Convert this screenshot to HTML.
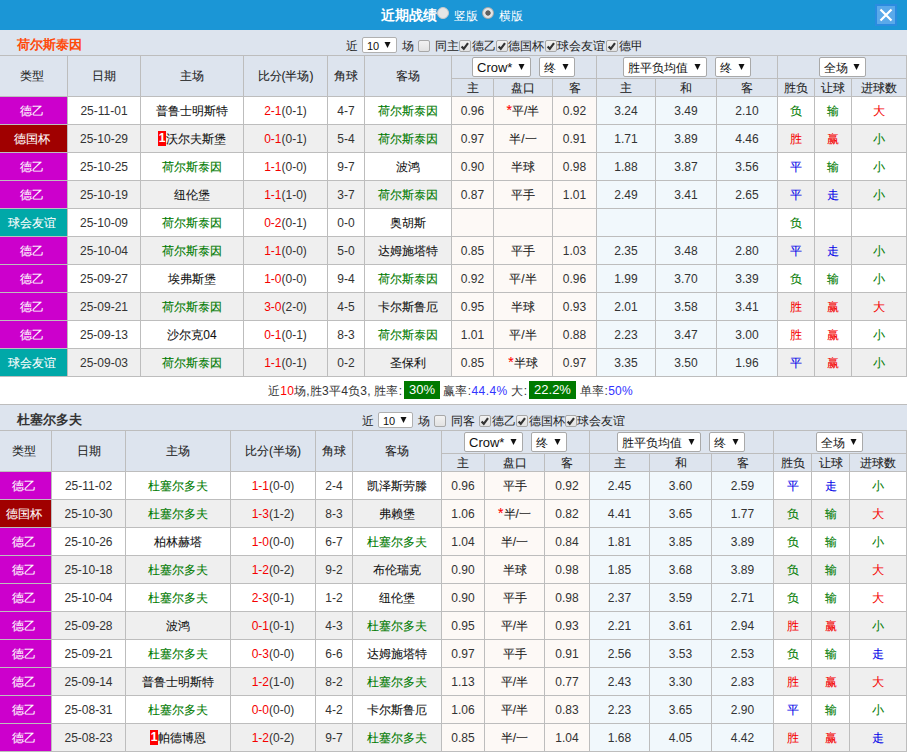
<!DOCTYPE html><html><head><meta charset="utf-8"><style>
*{margin:0;padding:0;box-sizing:border-box}
html,body{width:907px;height:752px;overflow:hidden;background:#fff}
body{position:relative;font-family:"Liberation Sans",sans-serif;font-size:12px;color:#333}
.a{position:absolute}
.t{position:absolute;text-align:center;white-space:nowrap;overflow:hidden}
.cj{-webkit-text-stroke:0.08px currentColor}
.lbl{position:absolute;white-space:nowrap;line-height:14px}
.sel{position:absolute;background:#fff;border:1px solid #a9a9a9;border-radius:2px;font-size:13px;color:#111;line-height:18px;white-space:nowrap}
.sel .sl{position:absolute;left:4px;top:1px}
.sel .arr{position:absolute;right:5px;top:6px}
.sel.small{font-size:11px;line-height:15px;border-color:#b0b0b0}
.sel.small .sl{left:4px;top:1px}
.sel.small .arr{right:5px;top:4px}
.cb{position:absolute;width:12px;height:12px;border:1px solid #a8a8a8;border-radius:2px;background:linear-gradient(#f2f2f2,#e2e2e2)}
.cb svg{position:absolute;left:-1px;top:-1px}
.radio{position:absolute;width:12px;height:12px;border-radius:50%;background:#e6e6e6;border:1px solid #c8c8c8}
.radio.on{border-color:#aaa;background:radial-gradient(circle,#5f5f5f 0,#5f5f5f 2.3px,#e4e4e4 3px)}
.close{position:absolute;width:22px;height:22px;background:#5aa9ea;border:2px solid #2b8be0}
.close svg{position:absolute;left:-2px;top:-2px}
.badge{display:inline-block;background:#f00;color:#fff;width:8px;height:15px;line-height:15px;text-align:center;font-weight:bold;font-size:12px;vertical-align:1px}
.gbox{position:absolute;background:#007a00;color:#fff;height:18px;line-height:18px;text-align:center;font-size:13px}
.ast{color:#f00;font-size:14px;line-height:12px}
.sum{font-size:12px;line-height:14px;color:#333}
</style></head><body><div class="a" style="left:0px;top:0px;width:907px;height:30px;background:#1b96d6;"></div><div class="lbl" style="left:381px;top:8px;font-size:14px;font-weight:bold;color:#fff">近期战绩</div><div class="radio" style="left:437px;top:7px"></div><div class="lbl" style="left:454px;top:9px;color:#fff">竖版</div><div class="radio on" style="left:482px;top:7px"></div><div class="lbl" style="left:499px;top:9px;color:#fff">横版</div><div class="close" style="left:875px;top:4px"><svg width="22" height="22" viewBox="0 0 22 22"><path d="M5.5 5.5 L16.5 16.5 M16.5 5.5 L5.5 16.5" stroke="#fff" stroke-width="2.2"/></svg></div><div class="a" style="left:0px;top:30px;width:907px;height:25px;background:#dde4ee;"></div><div class="lbl" style="left:17px;top:38px;font-size:13px;font-weight:bold;color:#ff4a0a">荷尔斯泰因</div><div class="lbl" style="left:346px;top:39px;color:#222">近</div><div class="sel small" style="left:362px;top:37px;width:35px;height:16px;"><span class="sl">10</span><svg class="arr" width="7" height="6" viewBox="0 0 7 6"><path d="M0.5 0H6.5L3.5 6Z" fill="#111"/></svg></div><div class="lbl" style="left:402px;top:39px;color:#222">场</div><div class="cb" style="left:418px;top:40px;"></div><div class="lbl" style="left:435px;top:39px;color:#222">同主</div><div class="cb" style="left:459px;top:40px;"><svg width="12" height="12" viewBox="0 0 12 12"><path d="M2.6 6.4 L4.8 8.8 L9 3.2" stroke="#333" stroke-width="2.2" fill="none"/></svg></div><div class="lbl" style="left:472px;top:39px;color:#222">德乙</div><div class="cb" style="left:496px;top:40px;"><svg width="12" height="12" viewBox="0 0 12 12"><path d="M2.6 6.4 L4.8 8.8 L9 3.2" stroke="#333" stroke-width="2.2" fill="none"/></svg></div><div class="lbl" style="left:508px;top:39px;color:#222">德国杯</div><div class="cb" style="left:545px;top:40px;"><svg width="12" height="12" viewBox="0 0 12 12"><path d="M2.6 6.4 L4.8 8.8 L9 3.2" stroke="#333" stroke-width="2.2" fill="none"/></svg></div><div class="lbl" style="left:557px;top:39px;color:#222">球会友谊</div><div class="cb" style="left:606px;top:40px;"><svg width="12" height="12" viewBox="0 0 12 12"><path d="M2.6 6.4 L4.8 8.8 L9 3.2" stroke="#333" stroke-width="2.2" fill="none"/></svg></div><div class="lbl" style="left:619px;top:39px;color:#222">德甲</div><div class="a" style="left:0px;top:55px;width:907px;height:41px;background:#dde4ee;"></div><div class="a" style="left:0px;top:96px;width:907px;height:28px;background:#ffffff;"></div><div class="a" style="left:67px;top:96px;width:384px;height:28px;background:#ffffff;"></div><div class="a" style="left:451px;top:96px;width:145px;height:28px;background:#fdf9f6;"></div><div class="a" style="left:596px;top:96px;width:181px;height:28px;background:#f1f8fc;"></div><div class="a" style="left:0px;top:96px;width:67px;height:28px;background:#cc00cc;"></div><div class="a" style="left:0px;top:124px;width:907px;height:28px;background:#efefef;"></div><div class="a" style="left:67px;top:124px;width:384px;height:28px;background:#efefef;"></div><div class="a" style="left:451px;top:124px;width:145px;height:28px;background:#fdf9f6;"></div><div class="a" style="left:596px;top:124px;width:181px;height:28px;background:#f1f8fc;"></div><div class="a" style="left:0px;top:124px;width:67px;height:28px;background:#a00000;"></div><div class="a" style="left:0px;top:152px;width:907px;height:28px;background:#ffffff;"></div><div class="a" style="left:67px;top:152px;width:384px;height:28px;background:#ffffff;"></div><div class="a" style="left:451px;top:152px;width:145px;height:28px;background:#fdf9f6;"></div><div class="a" style="left:596px;top:152px;width:181px;height:28px;background:#f1f8fc;"></div><div class="a" style="left:0px;top:152px;width:67px;height:28px;background:#cc00cc;"></div><div class="a" style="left:0px;top:180px;width:907px;height:28px;background:#efefef;"></div><div class="a" style="left:67px;top:180px;width:384px;height:28px;background:#efefef;"></div><div class="a" style="left:451px;top:180px;width:145px;height:28px;background:#fdf9f6;"></div><div class="a" style="left:596px;top:180px;width:181px;height:28px;background:#f1f8fc;"></div><div class="a" style="left:0px;top:180px;width:67px;height:28px;background:#cc00cc;"></div><div class="a" style="left:0px;top:208px;width:907px;height:28px;background:#ffffff;"></div><div class="a" style="left:67px;top:208px;width:384px;height:28px;background:#ffffff;"></div><div class="a" style="left:451px;top:208px;width:145px;height:28px;background:#fdf9f6;"></div><div class="a" style="left:596px;top:208px;width:181px;height:28px;background:#f1f8fc;"></div><div class="a" style="left:0px;top:208px;width:67px;height:28px;background:#00a8a8;"></div><div class="a" style="left:0px;top:236px;width:907px;height:28px;background:#efefef;"></div><div class="a" style="left:67px;top:236px;width:384px;height:28px;background:#efefef;"></div><div class="a" style="left:451px;top:236px;width:145px;height:28px;background:#fdf9f6;"></div><div class="a" style="left:596px;top:236px;width:181px;height:28px;background:#f1f8fc;"></div><div class="a" style="left:0px;top:236px;width:67px;height:28px;background:#cc00cc;"></div><div class="a" style="left:0px;top:264px;width:907px;height:28px;background:#ffffff;"></div><div class="a" style="left:67px;top:264px;width:384px;height:28px;background:#ffffff;"></div><div class="a" style="left:451px;top:264px;width:145px;height:28px;background:#fdf9f6;"></div><div class="a" style="left:596px;top:264px;width:181px;height:28px;background:#f1f8fc;"></div><div class="a" style="left:0px;top:264px;width:67px;height:28px;background:#cc00cc;"></div><div class="a" style="left:0px;top:292px;width:907px;height:28px;background:#efefef;"></div><div class="a" style="left:67px;top:292px;width:384px;height:28px;background:#efefef;"></div><div class="a" style="left:451px;top:292px;width:145px;height:28px;background:#fdf9f6;"></div><div class="a" style="left:596px;top:292px;width:181px;height:28px;background:#f1f8fc;"></div><div class="a" style="left:0px;top:292px;width:67px;height:28px;background:#cc00cc;"></div><div class="a" style="left:0px;top:320px;width:907px;height:28px;background:#ffffff;"></div><div class="a" style="left:67px;top:320px;width:384px;height:28px;background:#ffffff;"></div><div class="a" style="left:451px;top:320px;width:145px;height:28px;background:#fdf9f6;"></div><div class="a" style="left:596px;top:320px;width:181px;height:28px;background:#f1f8fc;"></div><div class="a" style="left:0px;top:320px;width:67px;height:28px;background:#cc00cc;"></div><div class="a" style="left:0px;top:348px;width:907px;height:28px;background:#efefef;"></div><div class="a" style="left:67px;top:348px;width:384px;height:28px;background:#efefef;"></div><div class="a" style="left:451px;top:348px;width:145px;height:28px;background:#fdf9f6;"></div><div class="a" style="left:596px;top:348px;width:181px;height:28px;background:#f1f8fc;"></div><div class="a" style="left:0px;top:348px;width:67px;height:28px;background:#00a8a8;"></div><div class="a" style="left:0px;top:55px;width:907px;height:1px;background:#bdbdbd;"></div><div class="a" style="left:451px;top:78px;width:456px;height:1px;background:#bdbdbd;"></div><div class="a" style="left:0px;top:96px;width:907px;height:1px;background:#bdbdbd;"></div><div class="a" style="left:0px;top:124px;width:907px;height:1px;background:#bdbdbd;"></div><div class="a" style="left:0px;top:152px;width:907px;height:1px;background:#bdbdbd;"></div><div class="a" style="left:0px;top:180px;width:907px;height:1px;background:#bdbdbd;"></div><div class="a" style="left:0px;top:208px;width:907px;height:1px;background:#bdbdbd;"></div><div class="a" style="left:0px;top:236px;width:907px;height:1px;background:#bdbdbd;"></div><div class="a" style="left:0px;top:264px;width:907px;height:1px;background:#bdbdbd;"></div><div class="a" style="left:0px;top:292px;width:907px;height:1px;background:#bdbdbd;"></div><div class="a" style="left:0px;top:320px;width:907px;height:1px;background:#bdbdbd;"></div><div class="a" style="left:0px;top:348px;width:907px;height:1px;background:#bdbdbd;"></div><div class="a" style="left:0px;top:376px;width:907px;height:1px;background:#bdbdbd;"></div><div class="a" style="left:67px;top:55px;width:1px;height:322px;background:#bdbdbd;"></div><div class="a" style="left:140px;top:55px;width:1px;height:322px;background:#bdbdbd;"></div><div class="a" style="left:243px;top:55px;width:1px;height:322px;background:#bdbdbd;"></div><div class="a" style="left:327px;top:55px;width:1px;height:322px;background:#bdbdbd;"></div><div class="a" style="left:364px;top:55px;width:1px;height:322px;background:#bdbdbd;"></div><div class="a" style="left:451px;top:55px;width:1px;height:322px;background:#bdbdbd;"></div><div class="a" style="left:596px;top:55px;width:1px;height:322px;background:#bdbdbd;"></div><div class="a" style="left:777px;top:55px;width:1px;height:322px;background:#bdbdbd;"></div><div class="a" style="left:906px;top:55px;width:1px;height:322px;background:#bdbdbd;"></div><div class="a" style="left:493px;top:78px;width:1px;height:299px;background:#bdbdbd;"></div><div class="a" style="left:552px;top:78px;width:1px;height:299px;background:#bdbdbd;"></div><div class="a" style="left:655px;top:78px;width:1px;height:299px;background:#bdbdbd;"></div><div class="a" style="left:716px;top:78px;width:1px;height:299px;background:#bdbdbd;"></div><div class="a" style="left:814px;top:78px;width:1px;height:299px;background:#bdbdbd;"></div><div class="a" style="left:851px;top:78px;width:1px;height:299px;background:#bdbdbd;"></div><div class="t cj" style="left:-4px;top:56px;width:71px;height:40px;line-height:40px;color:#222;">类型</div><div class="t cj" style="left:68px;top:56px;width:72px;height:40px;line-height:40px;color:#222;">日期</div><div class="t cj" style="left:141px;top:56px;width:102px;height:40px;line-height:40px;color:#222;">主场</div><div class="t cj" style="left:244px;top:56px;width:83px;height:40px;line-height:40px;color:#222;">比分(半场)</div><div class="t cj" style="left:328px;top:56px;width:36px;height:40px;line-height:40px;color:#222;">角球</div><div class="t cj" style="left:365px;top:56px;width:86px;height:40px;line-height:40px;color:#222;">客场</div><div class="t cj" style="left:452px;top:80px;width:41px;height:17px;line-height:17px;color:#222;">主</div><div class="t cj" style="left:494px;top:80px;width:58px;height:17px;line-height:17px;color:#222;">盘口</div><div class="t cj" style="left:553px;top:80px;width:43px;height:17px;line-height:17px;color:#222;">客</div><div class="t cj" style="left:597px;top:80px;width:58px;height:17px;line-height:17px;color:#222;">主</div><div class="t cj" style="left:656px;top:80px;width:60px;height:17px;line-height:17px;color:#222;">和</div><div class="t cj" style="left:717px;top:80px;width:60px;height:17px;line-height:17px;color:#222;">客</div><div class="t cj" style="left:778px;top:80px;width:36px;height:17px;line-height:17px;color:#222;">胜负</div><div class="t cj" style="left:815px;top:80px;width:36px;height:17px;line-height:17px;color:#222;">让球</div><div class="t cj" style="left:852px;top:80px;width:54px;height:17px;line-height:17px;color:#222;">进球数</div><div class="t cj" style="left:-4px;top:98px;width:71px;height:27px;line-height:27px;color:#fff;">德乙</div><div class="t" style="left:68px;top:98px;width:72px;height:27px;line-height:27px;color:#333;">25-11-01</div><div class="t cj" style="left:141px;top:98px;width:102px;height:27px;line-height:27px;color:#111;">普鲁士明斯特</div><div class="t" style="left:244px;top:98px;width:83px;height:27px;line-height:27px;color:#333;"><span style="color:#f50000">2-1</span>(0-1)</div><div class="t" style="left:328px;top:98px;width:36px;height:27px;line-height:27px;color:#333;">4-7</div><div class="t cj" style="left:365px;top:98px;width:86px;height:27px;line-height:27px;color:#007a00;">荷尔斯泰因</div><div class="t" style="left:452px;top:98px;width:41px;height:27px;line-height:27px;color:#333;">0.96</div><div class="t cj" style="left:494px;top:98px;width:58px;height:27px;line-height:27px;color:#222;"><span class="ast">*</span>平/半</div><div class="t" style="left:553px;top:98px;width:43px;height:27px;line-height:27px;color:#333;">0.92</div><div class="t" style="left:597px;top:98px;width:58px;height:27px;line-height:27px;color:#333;">3.24</div><div class="t" style="left:656px;top:98px;width:60px;height:27px;line-height:27px;color:#333;">3.49</div><div class="t" style="left:717px;top:98px;width:60px;height:27px;line-height:27px;color:#333;">2.10</div><div class="t cj" style="left:778px;top:98px;width:36px;height:27px;line-height:27px;color:#007a00;">负</div><div class="t cj" style="left:815px;top:98px;width:36px;height:27px;line-height:27px;color:#007a00;">输</div><div class="t cj" style="left:852px;top:98px;width:54px;height:27px;line-height:27px;color:#f50000;">大</div><div class="t cj" style="left:-4px;top:126px;width:71px;height:27px;line-height:27px;color:#fff;">德国杯</div><div class="t" style="left:68px;top:126px;width:72px;height:27px;line-height:27px;color:#333;">25-10-29</div><div class="t cj" style="left:141px;top:126px;width:102px;height:27px;line-height:27px;color:#111;"><span class="badge">1</span>沃尔夫斯堡</div><div class="t" style="left:244px;top:126px;width:83px;height:27px;line-height:27px;color:#333;"><span style="color:#f50000">0-1</span>(0-1)</div><div class="t" style="left:328px;top:126px;width:36px;height:27px;line-height:27px;color:#333;">5-4</div><div class="t cj" style="left:365px;top:126px;width:86px;height:27px;line-height:27px;color:#007a00;">荷尔斯泰因</div><div class="t" style="left:452px;top:126px;width:41px;height:27px;line-height:27px;color:#333;">0.97</div><div class="t cj" style="left:494px;top:126px;width:58px;height:27px;line-height:27px;color:#222;">半/一</div><div class="t" style="left:553px;top:126px;width:43px;height:27px;line-height:27px;color:#333;">0.91</div><div class="t" style="left:597px;top:126px;width:58px;height:27px;line-height:27px;color:#333;">1.71</div><div class="t" style="left:656px;top:126px;width:60px;height:27px;line-height:27px;color:#333;">3.89</div><div class="t" style="left:717px;top:126px;width:60px;height:27px;line-height:27px;color:#333;">4.46</div><div class="t cj" style="left:778px;top:126px;width:36px;height:27px;line-height:27px;color:#f50000;">胜</div><div class="t cj" style="left:815px;top:126px;width:36px;height:27px;line-height:27px;color:#f50000;">赢</div><div class="t cj" style="left:852px;top:126px;width:54px;height:27px;line-height:27px;color:#007a00;">小</div><div class="t cj" style="left:-4px;top:154px;width:71px;height:27px;line-height:27px;color:#fff;">德乙</div><div class="t" style="left:68px;top:154px;width:72px;height:27px;line-height:27px;color:#333;">25-10-25</div><div class="t cj" style="left:141px;top:154px;width:102px;height:27px;line-height:27px;color:#007a00;">荷尔斯泰因</div><div class="t" style="left:244px;top:154px;width:83px;height:27px;line-height:27px;color:#333;"><span style="color:#f50000">1-1</span>(0-0)</div><div class="t" style="left:328px;top:154px;width:36px;height:27px;line-height:27px;color:#333;">9-7</div><div class="t cj" style="left:365px;top:154px;width:86px;height:27px;line-height:27px;color:#111;">波鸿</div><div class="t" style="left:452px;top:154px;width:41px;height:27px;line-height:27px;color:#333;">0.90</div><div class="t cj" style="left:494px;top:154px;width:58px;height:27px;line-height:27px;color:#222;">半球</div><div class="t" style="left:553px;top:154px;width:43px;height:27px;line-height:27px;color:#333;">0.98</div><div class="t" style="left:597px;top:154px;width:58px;height:27px;line-height:27px;color:#333;">1.88</div><div class="t" style="left:656px;top:154px;width:60px;height:27px;line-height:27px;color:#333;">3.87</div><div class="t" style="left:717px;top:154px;width:60px;height:27px;line-height:27px;color:#333;">3.56</div><div class="t cj" style="left:778px;top:154px;width:36px;height:27px;line-height:27px;color:#0000e8;">平</div><div class="t cj" style="left:815px;top:154px;width:36px;height:27px;line-height:27px;color:#007a00;">输</div><div class="t cj" style="left:852px;top:154px;width:54px;height:27px;line-height:27px;color:#007a00;">小</div><div class="t cj" style="left:-4px;top:182px;width:71px;height:27px;line-height:27px;color:#fff;">德乙</div><div class="t" style="left:68px;top:182px;width:72px;height:27px;line-height:27px;color:#333;">25-10-19</div><div class="t cj" style="left:141px;top:182px;width:102px;height:27px;line-height:27px;color:#111;">纽伦堡</div><div class="t" style="left:244px;top:182px;width:83px;height:27px;line-height:27px;color:#333;"><span style="color:#f50000">1-1</span>(1-0)</div><div class="t" style="left:328px;top:182px;width:36px;height:27px;line-height:27px;color:#333;">3-7</div><div class="t cj" style="left:365px;top:182px;width:86px;height:27px;line-height:27px;color:#007a00;">荷尔斯泰因</div><div class="t" style="left:452px;top:182px;width:41px;height:27px;line-height:27px;color:#333;">0.87</div><div class="t cj" style="left:494px;top:182px;width:58px;height:27px;line-height:27px;color:#222;">平手</div><div class="t" style="left:553px;top:182px;width:43px;height:27px;line-height:27px;color:#333;">1.01</div><div class="t" style="left:597px;top:182px;width:58px;height:27px;line-height:27px;color:#333;">2.49</div><div class="t" style="left:656px;top:182px;width:60px;height:27px;line-height:27px;color:#333;">3.41</div><div class="t" style="left:717px;top:182px;width:60px;height:27px;line-height:27px;color:#333;">2.65</div><div class="t cj" style="left:778px;top:182px;width:36px;height:27px;line-height:27px;color:#0000e8;">平</div><div class="t cj" style="left:815px;top:182px;width:36px;height:27px;line-height:27px;color:#0000e8;">走</div><div class="t cj" style="left:852px;top:182px;width:54px;height:27px;line-height:27px;color:#007a00;">小</div><div class="t cj" style="left:-4px;top:210px;width:71px;height:27px;line-height:27px;color:#fff;">球会友谊</div><div class="t" style="left:68px;top:210px;width:72px;height:27px;line-height:27px;color:#333;">25-10-09</div><div class="t cj" style="left:141px;top:210px;width:102px;height:27px;line-height:27px;color:#007a00;">荷尔斯泰因</div><div class="t" style="left:244px;top:210px;width:83px;height:27px;line-height:27px;color:#333;"><span style="color:#f50000">0-2</span>(0-1)</div><div class="t" style="left:328px;top:210px;width:36px;height:27px;line-height:27px;color:#333;">0-0</div><div class="t cj" style="left:365px;top:210px;width:86px;height:27px;line-height:27px;color:#111;">奥胡斯</div><div class="t" style="left:452px;top:210px;width:41px;height:27px;line-height:27px;color:#333;"></div><div class="t" style="left:494px;top:210px;width:58px;height:27px;line-height:27px;color:#222;"></div><div class="t" style="left:553px;top:210px;width:43px;height:27px;line-height:27px;color:#333;"></div><div class="t" style="left:597px;top:210px;width:58px;height:27px;line-height:27px;color:#333;"></div><div class="t" style="left:656px;top:210px;width:60px;height:27px;line-height:27px;color:#333;"></div><div class="t" style="left:717px;top:210px;width:60px;height:27px;line-height:27px;color:#333;"></div><div class="t cj" style="left:778px;top:210px;width:36px;height:27px;line-height:27px;color:#007a00;">负</div><div class="t" style="left:815px;top:210px;width:36px;height:27px;line-height:27px;color:#333;"></div><div class="t" style="left:852px;top:210px;width:54px;height:27px;line-height:27px;color:#333;"></div><div class="t cj" style="left:-4px;top:238px;width:71px;height:27px;line-height:27px;color:#fff;">德乙</div><div class="t" style="left:68px;top:238px;width:72px;height:27px;line-height:27px;color:#333;">25-10-04</div><div class="t cj" style="left:141px;top:238px;width:102px;height:27px;line-height:27px;color:#007a00;">荷尔斯泰因</div><div class="t" style="left:244px;top:238px;width:83px;height:27px;line-height:27px;color:#333;"><span style="color:#f50000">1-1</span>(0-0)</div><div class="t" style="left:328px;top:238px;width:36px;height:27px;line-height:27px;color:#333;">5-0</div><div class="t cj" style="left:365px;top:238px;width:86px;height:27px;line-height:27px;color:#111;">达姆施塔特</div><div class="t" style="left:452px;top:238px;width:41px;height:27px;line-height:27px;color:#333;">0.85</div><div class="t cj" style="left:494px;top:238px;width:58px;height:27px;line-height:27px;color:#222;">平手</div><div class="t" style="left:553px;top:238px;width:43px;height:27px;line-height:27px;color:#333;">1.03</div><div class="t" style="left:597px;top:238px;width:58px;height:27px;line-height:27px;color:#333;">2.35</div><div class="t" style="left:656px;top:238px;width:60px;height:27px;line-height:27px;color:#333;">3.48</div><div class="t" style="left:717px;top:238px;width:60px;height:27px;line-height:27px;color:#333;">2.80</div><div class="t cj" style="left:778px;top:238px;width:36px;height:27px;line-height:27px;color:#0000e8;">平</div><div class="t cj" style="left:815px;top:238px;width:36px;height:27px;line-height:27px;color:#0000e8;">走</div><div class="t cj" style="left:852px;top:238px;width:54px;height:27px;line-height:27px;color:#007a00;">小</div><div class="t cj" style="left:-4px;top:266px;width:71px;height:27px;line-height:27px;color:#fff;">德乙</div><div class="t" style="left:68px;top:266px;width:72px;height:27px;line-height:27px;color:#333;">25-09-27</div><div class="t cj" style="left:141px;top:266px;width:102px;height:27px;line-height:27px;color:#111;">埃弗斯堡</div><div class="t" style="left:244px;top:266px;width:83px;height:27px;line-height:27px;color:#333;"><span style="color:#f50000">1-0</span>(0-0)</div><div class="t" style="left:328px;top:266px;width:36px;height:27px;line-height:27px;color:#333;">9-4</div><div class="t cj" style="left:365px;top:266px;width:86px;height:27px;line-height:27px;color:#007a00;">荷尔斯泰因</div><div class="t" style="left:452px;top:266px;width:41px;height:27px;line-height:27px;color:#333;">0.92</div><div class="t cj" style="left:494px;top:266px;width:58px;height:27px;line-height:27px;color:#222;">平/半</div><div class="t" style="left:553px;top:266px;width:43px;height:27px;line-height:27px;color:#333;">0.96</div><div class="t" style="left:597px;top:266px;width:58px;height:27px;line-height:27px;color:#333;">1.99</div><div class="t" style="left:656px;top:266px;width:60px;height:27px;line-height:27px;color:#333;">3.70</div><div class="t" style="left:717px;top:266px;width:60px;height:27px;line-height:27px;color:#333;">3.39</div><div class="t cj" style="left:778px;top:266px;width:36px;height:27px;line-height:27px;color:#007a00;">负</div><div class="t cj" style="left:815px;top:266px;width:36px;height:27px;line-height:27px;color:#007a00;">输</div><div class="t cj" style="left:852px;top:266px;width:54px;height:27px;line-height:27px;color:#007a00;">小</div><div class="t cj" style="left:-4px;top:294px;width:71px;height:27px;line-height:27px;color:#fff;">德乙</div><div class="t" style="left:68px;top:294px;width:72px;height:27px;line-height:27px;color:#333;">25-09-21</div><div class="t cj" style="left:141px;top:294px;width:102px;height:27px;line-height:27px;color:#007a00;">荷尔斯泰因</div><div class="t" style="left:244px;top:294px;width:83px;height:27px;line-height:27px;color:#333;"><span style="color:#f50000">3-0</span>(2-0)</div><div class="t" style="left:328px;top:294px;width:36px;height:27px;line-height:27px;color:#333;">4-5</div><div class="t cj" style="left:365px;top:294px;width:86px;height:27px;line-height:27px;color:#111;">卡尔斯鲁厄</div><div class="t" style="left:452px;top:294px;width:41px;height:27px;line-height:27px;color:#333;">0.95</div><div class="t cj" style="left:494px;top:294px;width:58px;height:27px;line-height:27px;color:#222;">半球</div><div class="t" style="left:553px;top:294px;width:43px;height:27px;line-height:27px;color:#333;">0.93</div><div class="t" style="left:597px;top:294px;width:58px;height:27px;line-height:27px;color:#333;">2.01</div><div class="t" style="left:656px;top:294px;width:60px;height:27px;line-height:27px;color:#333;">3.58</div><div class="t" style="left:717px;top:294px;width:60px;height:27px;line-height:27px;color:#333;">3.41</div><div class="t cj" style="left:778px;top:294px;width:36px;height:27px;line-height:27px;color:#f50000;">胜</div><div class="t cj" style="left:815px;top:294px;width:36px;height:27px;line-height:27px;color:#f50000;">赢</div><div class="t cj" style="left:852px;top:294px;width:54px;height:27px;line-height:27px;color:#f50000;">大</div><div class="t cj" style="left:-4px;top:322px;width:71px;height:27px;line-height:27px;color:#fff;">德乙</div><div class="t" style="left:68px;top:322px;width:72px;height:27px;line-height:27px;color:#333;">25-09-13</div><div class="t cj" style="left:141px;top:322px;width:102px;height:27px;line-height:27px;color:#111;">沙尔克04</div><div class="t" style="left:244px;top:322px;width:83px;height:27px;line-height:27px;color:#333;"><span style="color:#f50000">0-1</span>(0-1)</div><div class="t" style="left:328px;top:322px;width:36px;height:27px;line-height:27px;color:#333;">8-3</div><div class="t cj" style="left:365px;top:322px;width:86px;height:27px;line-height:27px;color:#007a00;">荷尔斯泰因</div><div class="t" style="left:452px;top:322px;width:41px;height:27px;line-height:27px;color:#333;">1.01</div><div class="t cj" style="left:494px;top:322px;width:58px;height:27px;line-height:27px;color:#222;">平/半</div><div class="t" style="left:553px;top:322px;width:43px;height:27px;line-height:27px;color:#333;">0.88</div><div class="t" style="left:597px;top:322px;width:58px;height:27px;line-height:27px;color:#333;">2.23</div><div class="t" style="left:656px;top:322px;width:60px;height:27px;line-height:27px;color:#333;">3.47</div><div class="t" style="left:717px;top:322px;width:60px;height:27px;line-height:27px;color:#333;">3.00</div><div class="t cj" style="left:778px;top:322px;width:36px;height:27px;line-height:27px;color:#f50000;">胜</div><div class="t cj" style="left:815px;top:322px;width:36px;height:27px;line-height:27px;color:#f50000;">赢</div><div class="t cj" style="left:852px;top:322px;width:54px;height:27px;line-height:27px;color:#007a00;">小</div><div class="t cj" style="left:-4px;top:350px;width:71px;height:27px;line-height:27px;color:#fff;">球会友谊</div><div class="t" style="left:68px;top:350px;width:72px;height:27px;line-height:27px;color:#333;">25-09-03</div><div class="t cj" style="left:141px;top:350px;width:102px;height:27px;line-height:27px;color:#007a00;">荷尔斯泰因</div><div class="t" style="left:244px;top:350px;width:83px;height:27px;line-height:27px;color:#333;"><span style="color:#f50000">1-1</span>(0-1)</div><div class="t" style="left:328px;top:350px;width:36px;height:27px;line-height:27px;color:#333;">0-2</div><div class="t cj" style="left:365px;top:350px;width:86px;height:27px;line-height:27px;color:#111;">圣保利</div><div class="t" style="left:452px;top:350px;width:41px;height:27px;line-height:27px;color:#333;">0.85</div><div class="t cj" style="left:494px;top:350px;width:58px;height:27px;line-height:27px;color:#222;"><span class="ast">*</span>半球</div><div class="t" style="left:553px;top:350px;width:43px;height:27px;line-height:27px;color:#333;">0.97</div><div class="t" style="left:597px;top:350px;width:58px;height:27px;line-height:27px;color:#333;">3.35</div><div class="t" style="left:656px;top:350px;width:60px;height:27px;line-height:27px;color:#333;">3.50</div><div class="t" style="left:717px;top:350px;width:60px;height:27px;line-height:27px;color:#333;">1.96</div><div class="t cj" style="left:778px;top:350px;width:36px;height:27px;line-height:27px;color:#0000e8;">平</div><div class="t cj" style="left:815px;top:350px;width:36px;height:27px;line-height:27px;color:#f50000;">赢</div><div class="t cj" style="left:852px;top:350px;width:54px;height:27px;line-height:27px;color:#007a00;">小</div><div class="a" style="left:0px;top:405px;width:907px;height:25px;background:#dde4ee;"></div><div class="lbl" style="left:17px;top:413px;font-size:13px;font-weight:bold;color:#333">杜塞尔多夫</div><div class="lbl" style="left:362px;top:414px;color:#222">近</div><div class="sel small" style="left:378px;top:412px;width:35px;height:16px;"><span class="sl">10</span><svg class="arr" width="7" height="6" viewBox="0 0 7 6"><path d="M0.5 0H6.5L3.5 6Z" fill="#111"/></svg></div><div class="lbl" style="left:418px;top:414px;color:#222">场</div><div class="cb" style="left:434px;top:415px;"></div><div class="lbl" style="left:451px;top:414px;color:#222">同客</div><div class="cb" style="left:479px;top:415px;"><svg width="12" height="12" viewBox="0 0 12 12"><path d="M2.6 6.4 L4.8 8.8 L9 3.2" stroke="#333" stroke-width="2.2" fill="none"/></svg></div><div class="lbl" style="left:492px;top:414px;color:#222">德乙</div><div class="cb" style="left:516px;top:415px;"><svg width="12" height="12" viewBox="0 0 12 12"><path d="M2.6 6.4 L4.8 8.8 L9 3.2" stroke="#333" stroke-width="2.2" fill="none"/></svg></div><div class="lbl" style="left:529px;top:414px;color:#222">德国杯</div><div class="cb" style="left:565px;top:415px;"><svg width="12" height="12" viewBox="0 0 12 12"><path d="M2.6 6.4 L4.8 8.8 L9 3.2" stroke="#333" stroke-width="2.2" fill="none"/></svg></div><div class="lbl" style="left:577px;top:414px;color:#222">球会友谊</div><div class="a" style="left:0px;top:430px;width:907px;height:41px;background:#dde4ee;"></div><div class="a" style="left:0px;top:471px;width:907px;height:28px;background:#ffffff;"></div><div class="a" style="left:51px;top:471px;width:390px;height:28px;background:#ffffff;"></div><div class="a" style="left:441px;top:471px;width:148px;height:28px;background:#fdf9f6;"></div><div class="a" style="left:589px;top:471px;width:184px;height:28px;background:#f1f8fc;"></div><div class="a" style="left:0px;top:471px;width:51px;height:28px;background:#cc00cc;"></div><div class="a" style="left:0px;top:499px;width:907px;height:28px;background:#efefef;"></div><div class="a" style="left:51px;top:499px;width:390px;height:28px;background:#efefef;"></div><div class="a" style="left:441px;top:499px;width:148px;height:28px;background:#fdf9f6;"></div><div class="a" style="left:589px;top:499px;width:184px;height:28px;background:#f1f8fc;"></div><div class="a" style="left:0px;top:499px;width:51px;height:28px;background:#a00000;"></div><div class="a" style="left:0px;top:527px;width:907px;height:28px;background:#ffffff;"></div><div class="a" style="left:51px;top:527px;width:390px;height:28px;background:#ffffff;"></div><div class="a" style="left:441px;top:527px;width:148px;height:28px;background:#fdf9f6;"></div><div class="a" style="left:589px;top:527px;width:184px;height:28px;background:#f1f8fc;"></div><div class="a" style="left:0px;top:527px;width:51px;height:28px;background:#cc00cc;"></div><div class="a" style="left:0px;top:555px;width:907px;height:28px;background:#efefef;"></div><div class="a" style="left:51px;top:555px;width:390px;height:28px;background:#efefef;"></div><div class="a" style="left:441px;top:555px;width:148px;height:28px;background:#fdf9f6;"></div><div class="a" style="left:589px;top:555px;width:184px;height:28px;background:#f1f8fc;"></div><div class="a" style="left:0px;top:555px;width:51px;height:28px;background:#cc00cc;"></div><div class="a" style="left:0px;top:583px;width:907px;height:28px;background:#ffffff;"></div><div class="a" style="left:51px;top:583px;width:390px;height:28px;background:#ffffff;"></div><div class="a" style="left:441px;top:583px;width:148px;height:28px;background:#fdf9f6;"></div><div class="a" style="left:589px;top:583px;width:184px;height:28px;background:#f1f8fc;"></div><div class="a" style="left:0px;top:583px;width:51px;height:28px;background:#cc00cc;"></div><div class="a" style="left:0px;top:611px;width:907px;height:28px;background:#efefef;"></div><div class="a" style="left:51px;top:611px;width:390px;height:28px;background:#efefef;"></div><div class="a" style="left:441px;top:611px;width:148px;height:28px;background:#fdf9f6;"></div><div class="a" style="left:589px;top:611px;width:184px;height:28px;background:#f1f8fc;"></div><div class="a" style="left:0px;top:611px;width:51px;height:28px;background:#cc00cc;"></div><div class="a" style="left:0px;top:639px;width:907px;height:28px;background:#ffffff;"></div><div class="a" style="left:51px;top:639px;width:390px;height:28px;background:#ffffff;"></div><div class="a" style="left:441px;top:639px;width:148px;height:28px;background:#fdf9f6;"></div><div class="a" style="left:589px;top:639px;width:184px;height:28px;background:#f1f8fc;"></div><div class="a" style="left:0px;top:639px;width:51px;height:28px;background:#cc00cc;"></div><div class="a" style="left:0px;top:667px;width:907px;height:28px;background:#efefef;"></div><div class="a" style="left:51px;top:667px;width:390px;height:28px;background:#efefef;"></div><div class="a" style="left:441px;top:667px;width:148px;height:28px;background:#fdf9f6;"></div><div class="a" style="left:589px;top:667px;width:184px;height:28px;background:#f1f8fc;"></div><div class="a" style="left:0px;top:667px;width:51px;height:28px;background:#cc00cc;"></div><div class="a" style="left:0px;top:695px;width:907px;height:28px;background:#ffffff;"></div><div class="a" style="left:51px;top:695px;width:390px;height:28px;background:#ffffff;"></div><div class="a" style="left:441px;top:695px;width:148px;height:28px;background:#fdf9f6;"></div><div class="a" style="left:589px;top:695px;width:184px;height:28px;background:#f1f8fc;"></div><div class="a" style="left:0px;top:695px;width:51px;height:28px;background:#cc00cc;"></div><div class="a" style="left:0px;top:723px;width:907px;height:28px;background:#efefef;"></div><div class="a" style="left:51px;top:723px;width:390px;height:28px;background:#efefef;"></div><div class="a" style="left:441px;top:723px;width:148px;height:28px;background:#fdf9f6;"></div><div class="a" style="left:589px;top:723px;width:184px;height:28px;background:#f1f8fc;"></div><div class="a" style="left:0px;top:723px;width:51px;height:28px;background:#cc00cc;"></div><div class="a" style="left:0px;top:430px;width:907px;height:1px;background:#bdbdbd;"></div><div class="a" style="left:441px;top:453px;width:466px;height:1px;background:#bdbdbd;"></div><div class="a" style="left:0px;top:471px;width:907px;height:1px;background:#bdbdbd;"></div><div class="a" style="left:0px;top:499px;width:907px;height:1px;background:#bdbdbd;"></div><div class="a" style="left:0px;top:527px;width:907px;height:1px;background:#bdbdbd;"></div><div class="a" style="left:0px;top:555px;width:907px;height:1px;background:#bdbdbd;"></div><div class="a" style="left:0px;top:583px;width:907px;height:1px;background:#bdbdbd;"></div><div class="a" style="left:0px;top:611px;width:907px;height:1px;background:#bdbdbd;"></div><div class="a" style="left:0px;top:639px;width:907px;height:1px;background:#bdbdbd;"></div><div class="a" style="left:0px;top:667px;width:907px;height:1px;background:#bdbdbd;"></div><div class="a" style="left:0px;top:695px;width:907px;height:1px;background:#bdbdbd;"></div><div class="a" style="left:0px;top:723px;width:907px;height:1px;background:#bdbdbd;"></div><div class="a" style="left:0px;top:751px;width:907px;height:1px;background:#bdbdbd;"></div><div class="a" style="left:51px;top:430px;width:1px;height:322px;background:#bdbdbd;"></div><div class="a" style="left:125px;top:430px;width:1px;height:322px;background:#bdbdbd;"></div><div class="a" style="left:230px;top:430px;width:1px;height:322px;background:#bdbdbd;"></div><div class="a" style="left:315px;top:430px;width:1px;height:322px;background:#bdbdbd;"></div><div class="a" style="left:352px;top:430px;width:1px;height:322px;background:#bdbdbd;"></div><div class="a" style="left:441px;top:430px;width:1px;height:322px;background:#bdbdbd;"></div><div class="a" style="left:589px;top:430px;width:1px;height:322px;background:#bdbdbd;"></div><div class="a" style="left:773px;top:430px;width:1px;height:322px;background:#bdbdbd;"></div><div class="a" style="left:906px;top:430px;width:1px;height:322px;background:#bdbdbd;"></div><div class="a" style="left:484px;top:453px;width:1px;height:299px;background:#bdbdbd;"></div><div class="a" style="left:544px;top:453px;width:1px;height:299px;background:#bdbdbd;"></div><div class="a" style="left:649px;top:453px;width:1px;height:299px;background:#bdbdbd;"></div><div class="a" style="left:711px;top:453px;width:1px;height:299px;background:#bdbdbd;"></div><div class="a" style="left:811px;top:453px;width:1px;height:299px;background:#bdbdbd;"></div><div class="a" style="left:849px;top:453px;width:1px;height:299px;background:#bdbdbd;"></div><div class="t cj" style="left:-4px;top:431px;width:55px;height:40px;line-height:40px;color:#222;">类型</div><div class="t cj" style="left:52px;top:431px;width:73px;height:40px;line-height:40px;color:#222;">日期</div><div class="t cj" style="left:126px;top:431px;width:104px;height:40px;line-height:40px;color:#222;">主场</div><div class="t cj" style="left:231px;top:431px;width:84px;height:40px;line-height:40px;color:#222;">比分(半场)</div><div class="t cj" style="left:316px;top:431px;width:36px;height:40px;line-height:40px;color:#222;">角球</div><div class="t cj" style="left:353px;top:431px;width:88px;height:40px;line-height:40px;color:#222;">客场</div><div class="t cj" style="left:442px;top:455px;width:42px;height:17px;line-height:17px;color:#222;">主</div><div class="t cj" style="left:485px;top:455px;width:59px;height:17px;line-height:17px;color:#222;">盘口</div><div class="t cj" style="left:545px;top:455px;width:44px;height:17px;line-height:17px;color:#222;">客</div><div class="t cj" style="left:590px;top:455px;width:59px;height:17px;line-height:17px;color:#222;">主</div><div class="t cj" style="left:650px;top:455px;width:61px;height:17px;line-height:17px;color:#222;">和</div><div class="t cj" style="left:712px;top:455px;width:61px;height:17px;line-height:17px;color:#222;">客</div><div class="t cj" style="left:774px;top:455px;width:37px;height:17px;line-height:17px;color:#222;">胜负</div><div class="t cj" style="left:812px;top:455px;width:37px;height:17px;line-height:17px;color:#222;">让球</div><div class="t cj" style="left:850px;top:455px;width:56px;height:17px;line-height:17px;color:#222;">进球数</div><div class="t cj" style="left:-4px;top:473px;width:55px;height:27px;line-height:27px;color:#fff;">德乙</div><div class="t" style="left:52px;top:473px;width:73px;height:27px;line-height:27px;color:#333;">25-11-02</div><div class="t cj" style="left:126px;top:473px;width:104px;height:27px;line-height:27px;color:#007a00;">杜塞尔多夫</div><div class="t" style="left:231px;top:473px;width:84px;height:27px;line-height:27px;color:#333;"><span style="color:#f50000">1-1</span>(0-0)</div><div class="t" style="left:316px;top:473px;width:36px;height:27px;line-height:27px;color:#333;">2-4</div><div class="t cj" style="left:353px;top:473px;width:88px;height:27px;line-height:27px;color:#111;">凯泽斯劳滕</div><div class="t" style="left:442px;top:473px;width:42px;height:27px;line-height:27px;color:#333;">0.96</div><div class="t cj" style="left:485px;top:473px;width:59px;height:27px;line-height:27px;color:#222;">平手</div><div class="t" style="left:545px;top:473px;width:44px;height:27px;line-height:27px;color:#333;">0.92</div><div class="t" style="left:590px;top:473px;width:59px;height:27px;line-height:27px;color:#333;">2.45</div><div class="t" style="left:650px;top:473px;width:61px;height:27px;line-height:27px;color:#333;">3.60</div><div class="t" style="left:712px;top:473px;width:61px;height:27px;line-height:27px;color:#333;">2.59</div><div class="t cj" style="left:774px;top:473px;width:37px;height:27px;line-height:27px;color:#0000e8;">平</div><div class="t cj" style="left:812px;top:473px;width:37px;height:27px;line-height:27px;color:#0000e8;">走</div><div class="t cj" style="left:850px;top:473px;width:56px;height:27px;line-height:27px;color:#007a00;">小</div><div class="t cj" style="left:-4px;top:501px;width:55px;height:27px;line-height:27px;color:#fff;">德国杯</div><div class="t" style="left:52px;top:501px;width:73px;height:27px;line-height:27px;color:#333;">25-10-30</div><div class="t cj" style="left:126px;top:501px;width:104px;height:27px;line-height:27px;color:#007a00;">杜塞尔多夫</div><div class="t" style="left:231px;top:501px;width:84px;height:27px;line-height:27px;color:#333;"><span style="color:#f50000">1-3</span>(1-2)</div><div class="t" style="left:316px;top:501px;width:36px;height:27px;line-height:27px;color:#333;">8-3</div><div class="t cj" style="left:353px;top:501px;width:88px;height:27px;line-height:27px;color:#111;">弗赖堡</div><div class="t" style="left:442px;top:501px;width:42px;height:27px;line-height:27px;color:#333;">1.06</div><div class="t cj" style="left:485px;top:501px;width:59px;height:27px;line-height:27px;color:#222;"><span class="ast">*</span>半/一</div><div class="t" style="left:545px;top:501px;width:44px;height:27px;line-height:27px;color:#333;">0.82</div><div class="t" style="left:590px;top:501px;width:59px;height:27px;line-height:27px;color:#333;">4.41</div><div class="t" style="left:650px;top:501px;width:61px;height:27px;line-height:27px;color:#333;">3.65</div><div class="t" style="left:712px;top:501px;width:61px;height:27px;line-height:27px;color:#333;">1.77</div><div class="t cj" style="left:774px;top:501px;width:37px;height:27px;line-height:27px;color:#007a00;">负</div><div class="t cj" style="left:812px;top:501px;width:37px;height:27px;line-height:27px;color:#007a00;">输</div><div class="t cj" style="left:850px;top:501px;width:56px;height:27px;line-height:27px;color:#f50000;">大</div><div class="t cj" style="left:-4px;top:529px;width:55px;height:27px;line-height:27px;color:#fff;">德乙</div><div class="t" style="left:52px;top:529px;width:73px;height:27px;line-height:27px;color:#333;">25-10-26</div><div class="t cj" style="left:126px;top:529px;width:104px;height:27px;line-height:27px;color:#111;">柏林赫塔</div><div class="t" style="left:231px;top:529px;width:84px;height:27px;line-height:27px;color:#333;"><span style="color:#f50000">1-0</span>(0-0)</div><div class="t" style="left:316px;top:529px;width:36px;height:27px;line-height:27px;color:#333;">6-7</div><div class="t cj" style="left:353px;top:529px;width:88px;height:27px;line-height:27px;color:#007a00;">杜塞尔多夫</div><div class="t" style="left:442px;top:529px;width:42px;height:27px;line-height:27px;color:#333;">1.04</div><div class="t cj" style="left:485px;top:529px;width:59px;height:27px;line-height:27px;color:#222;">半/一</div><div class="t" style="left:545px;top:529px;width:44px;height:27px;line-height:27px;color:#333;">0.84</div><div class="t" style="left:590px;top:529px;width:59px;height:27px;line-height:27px;color:#333;">1.81</div><div class="t" style="left:650px;top:529px;width:61px;height:27px;line-height:27px;color:#333;">3.85</div><div class="t" style="left:712px;top:529px;width:61px;height:27px;line-height:27px;color:#333;">3.89</div><div class="t cj" style="left:774px;top:529px;width:37px;height:27px;line-height:27px;color:#007a00;">负</div><div class="t cj" style="left:812px;top:529px;width:37px;height:27px;line-height:27px;color:#007a00;">输</div><div class="t cj" style="left:850px;top:529px;width:56px;height:27px;line-height:27px;color:#007a00;">小</div><div class="t cj" style="left:-4px;top:557px;width:55px;height:27px;line-height:27px;color:#fff;">德乙</div><div class="t" style="left:52px;top:557px;width:73px;height:27px;line-height:27px;color:#333;">25-10-18</div><div class="t cj" style="left:126px;top:557px;width:104px;height:27px;line-height:27px;color:#007a00;">杜塞尔多夫</div><div class="t" style="left:231px;top:557px;width:84px;height:27px;line-height:27px;color:#333;"><span style="color:#f50000">1-2</span>(0-2)</div><div class="t" style="left:316px;top:557px;width:36px;height:27px;line-height:27px;color:#333;">9-2</div><div class="t cj" style="left:353px;top:557px;width:88px;height:27px;line-height:27px;color:#111;">布伦瑞克</div><div class="t" style="left:442px;top:557px;width:42px;height:27px;line-height:27px;color:#333;">0.90</div><div class="t cj" style="left:485px;top:557px;width:59px;height:27px;line-height:27px;color:#222;">半球</div><div class="t" style="left:545px;top:557px;width:44px;height:27px;line-height:27px;color:#333;">0.98</div><div class="t" style="left:590px;top:557px;width:59px;height:27px;line-height:27px;color:#333;">1.85</div><div class="t" style="left:650px;top:557px;width:61px;height:27px;line-height:27px;color:#333;">3.68</div><div class="t" style="left:712px;top:557px;width:61px;height:27px;line-height:27px;color:#333;">3.89</div><div class="t cj" style="left:774px;top:557px;width:37px;height:27px;line-height:27px;color:#007a00;">负</div><div class="t cj" style="left:812px;top:557px;width:37px;height:27px;line-height:27px;color:#007a00;">输</div><div class="t cj" style="left:850px;top:557px;width:56px;height:27px;line-height:27px;color:#f50000;">大</div><div class="t cj" style="left:-4px;top:585px;width:55px;height:27px;line-height:27px;color:#fff;">德乙</div><div class="t" style="left:52px;top:585px;width:73px;height:27px;line-height:27px;color:#333;">25-10-04</div><div class="t cj" style="left:126px;top:585px;width:104px;height:27px;line-height:27px;color:#007a00;">杜塞尔多夫</div><div class="t" style="left:231px;top:585px;width:84px;height:27px;line-height:27px;color:#333;"><span style="color:#f50000">2-3</span>(0-1)</div><div class="t" style="left:316px;top:585px;width:36px;height:27px;line-height:27px;color:#333;">1-2</div><div class="t cj" style="left:353px;top:585px;width:88px;height:27px;line-height:27px;color:#111;">纽伦堡</div><div class="t" style="left:442px;top:585px;width:42px;height:27px;line-height:27px;color:#333;">0.90</div><div class="t cj" style="left:485px;top:585px;width:59px;height:27px;line-height:27px;color:#222;">平手</div><div class="t" style="left:545px;top:585px;width:44px;height:27px;line-height:27px;color:#333;">0.98</div><div class="t" style="left:590px;top:585px;width:59px;height:27px;line-height:27px;color:#333;">2.37</div><div class="t" style="left:650px;top:585px;width:61px;height:27px;line-height:27px;color:#333;">3.59</div><div class="t" style="left:712px;top:585px;width:61px;height:27px;line-height:27px;color:#333;">2.71</div><div class="t cj" style="left:774px;top:585px;width:37px;height:27px;line-height:27px;color:#007a00;">负</div><div class="t cj" style="left:812px;top:585px;width:37px;height:27px;line-height:27px;color:#007a00;">输</div><div class="t cj" style="left:850px;top:585px;width:56px;height:27px;line-height:27px;color:#f50000;">大</div><div class="t cj" style="left:-4px;top:613px;width:55px;height:27px;line-height:27px;color:#fff;">德乙</div><div class="t" style="left:52px;top:613px;width:73px;height:27px;line-height:27px;color:#333;">25-09-28</div><div class="t cj" style="left:126px;top:613px;width:104px;height:27px;line-height:27px;color:#111;">波鸿</div><div class="t" style="left:231px;top:613px;width:84px;height:27px;line-height:27px;color:#333;"><span style="color:#f50000">0-1</span>(0-1)</div><div class="t" style="left:316px;top:613px;width:36px;height:27px;line-height:27px;color:#333;">4-3</div><div class="t cj" style="left:353px;top:613px;width:88px;height:27px;line-height:27px;color:#007a00;">杜塞尔多夫</div><div class="t" style="left:442px;top:613px;width:42px;height:27px;line-height:27px;color:#333;">0.95</div><div class="t cj" style="left:485px;top:613px;width:59px;height:27px;line-height:27px;color:#222;">平/半</div><div class="t" style="left:545px;top:613px;width:44px;height:27px;line-height:27px;color:#333;">0.93</div><div class="t" style="left:590px;top:613px;width:59px;height:27px;line-height:27px;color:#333;">2.21</div><div class="t" style="left:650px;top:613px;width:61px;height:27px;line-height:27px;color:#333;">3.61</div><div class="t" style="left:712px;top:613px;width:61px;height:27px;line-height:27px;color:#333;">2.94</div><div class="t cj" style="left:774px;top:613px;width:37px;height:27px;line-height:27px;color:#f50000;">胜</div><div class="t cj" style="left:812px;top:613px;width:37px;height:27px;line-height:27px;color:#f50000;">赢</div><div class="t cj" style="left:850px;top:613px;width:56px;height:27px;line-height:27px;color:#007a00;">小</div><div class="t cj" style="left:-4px;top:641px;width:55px;height:27px;line-height:27px;color:#fff;">德乙</div><div class="t" style="left:52px;top:641px;width:73px;height:27px;line-height:27px;color:#333;">25-09-21</div><div class="t cj" style="left:126px;top:641px;width:104px;height:27px;line-height:27px;color:#007a00;">杜塞尔多夫</div><div class="t" style="left:231px;top:641px;width:84px;height:27px;line-height:27px;color:#333;"><span style="color:#f50000">0-3</span>(0-0)</div><div class="t" style="left:316px;top:641px;width:36px;height:27px;line-height:27px;color:#333;">6-6</div><div class="t cj" style="left:353px;top:641px;width:88px;height:27px;line-height:27px;color:#111;">达姆施塔特</div><div class="t" style="left:442px;top:641px;width:42px;height:27px;line-height:27px;color:#333;">0.97</div><div class="t cj" style="left:485px;top:641px;width:59px;height:27px;line-height:27px;color:#222;">平手</div><div class="t" style="left:545px;top:641px;width:44px;height:27px;line-height:27px;color:#333;">0.91</div><div class="t" style="left:590px;top:641px;width:59px;height:27px;line-height:27px;color:#333;">2.56</div><div class="t" style="left:650px;top:641px;width:61px;height:27px;line-height:27px;color:#333;">3.53</div><div class="t" style="left:712px;top:641px;width:61px;height:27px;line-height:27px;color:#333;">2.53</div><div class="t cj" style="left:774px;top:641px;width:37px;height:27px;line-height:27px;color:#007a00;">负</div><div class="t cj" style="left:812px;top:641px;width:37px;height:27px;line-height:27px;color:#007a00;">输</div><div class="t cj" style="left:850px;top:641px;width:56px;height:27px;line-height:27px;color:#0000e8;">走</div><div class="t cj" style="left:-4px;top:669px;width:55px;height:27px;line-height:27px;color:#fff;">德乙</div><div class="t" style="left:52px;top:669px;width:73px;height:27px;line-height:27px;color:#333;">25-09-14</div><div class="t cj" style="left:126px;top:669px;width:104px;height:27px;line-height:27px;color:#111;">普鲁士明斯特</div><div class="t" style="left:231px;top:669px;width:84px;height:27px;line-height:27px;color:#333;"><span style="color:#f50000">1-2</span>(1-0)</div><div class="t" style="left:316px;top:669px;width:36px;height:27px;line-height:27px;color:#333;">8-2</div><div class="t cj" style="left:353px;top:669px;width:88px;height:27px;line-height:27px;color:#007a00;">杜塞尔多夫</div><div class="t" style="left:442px;top:669px;width:42px;height:27px;line-height:27px;color:#333;">1.13</div><div class="t cj" style="left:485px;top:669px;width:59px;height:27px;line-height:27px;color:#222;">平/半</div><div class="t" style="left:545px;top:669px;width:44px;height:27px;line-height:27px;color:#333;">0.77</div><div class="t" style="left:590px;top:669px;width:59px;height:27px;line-height:27px;color:#333;">2.43</div><div class="t" style="left:650px;top:669px;width:61px;height:27px;line-height:27px;color:#333;">3.30</div><div class="t" style="left:712px;top:669px;width:61px;height:27px;line-height:27px;color:#333;">2.83</div><div class="t cj" style="left:774px;top:669px;width:37px;height:27px;line-height:27px;color:#f50000;">胜</div><div class="t cj" style="left:812px;top:669px;width:37px;height:27px;line-height:27px;color:#f50000;">赢</div><div class="t cj" style="left:850px;top:669px;width:56px;height:27px;line-height:27px;color:#f50000;">大</div><div class="t cj" style="left:-4px;top:697px;width:55px;height:27px;line-height:27px;color:#fff;">德乙</div><div class="t" style="left:52px;top:697px;width:73px;height:27px;line-height:27px;color:#333;">25-08-31</div><div class="t cj" style="left:126px;top:697px;width:104px;height:27px;line-height:27px;color:#007a00;">杜塞尔多夫</div><div class="t" style="left:231px;top:697px;width:84px;height:27px;line-height:27px;color:#333;"><span style="color:#f50000">0-0</span>(0-0)</div><div class="t" style="left:316px;top:697px;width:36px;height:27px;line-height:27px;color:#333;">4-2</div><div class="t cj" style="left:353px;top:697px;width:88px;height:27px;line-height:27px;color:#111;">卡尔斯鲁厄</div><div class="t" style="left:442px;top:697px;width:42px;height:27px;line-height:27px;color:#333;">1.06</div><div class="t cj" style="left:485px;top:697px;width:59px;height:27px;line-height:27px;color:#222;">平/半</div><div class="t" style="left:545px;top:697px;width:44px;height:27px;line-height:27px;color:#333;">0.83</div><div class="t" style="left:590px;top:697px;width:59px;height:27px;line-height:27px;color:#333;">2.23</div><div class="t" style="left:650px;top:697px;width:61px;height:27px;line-height:27px;color:#333;">3.65</div><div class="t" style="left:712px;top:697px;width:61px;height:27px;line-height:27px;color:#333;">2.90</div><div class="t cj" style="left:774px;top:697px;width:37px;height:27px;line-height:27px;color:#0000e8;">平</div><div class="t cj" style="left:812px;top:697px;width:37px;height:27px;line-height:27px;color:#007a00;">输</div><div class="t cj" style="left:850px;top:697px;width:56px;height:27px;line-height:27px;color:#007a00;">小</div><div class="t cj" style="left:-4px;top:725px;width:55px;height:27px;line-height:27px;color:#fff;">德乙</div><div class="t" style="left:52px;top:725px;width:73px;height:27px;line-height:27px;color:#333;">25-08-23</div><div class="t cj" style="left:126px;top:725px;width:104px;height:27px;line-height:27px;color:#111;"><span class="badge">1</span>帕德博恩</div><div class="t" style="left:231px;top:725px;width:84px;height:27px;line-height:27px;color:#333;"><span style="color:#f50000">1-2</span>(0-2)</div><div class="t" style="left:316px;top:725px;width:36px;height:27px;line-height:27px;color:#333;">9-7</div><div class="t cj" style="left:353px;top:725px;width:88px;height:27px;line-height:27px;color:#007a00;">杜塞尔多夫</div><div class="t" style="left:442px;top:725px;width:42px;height:27px;line-height:27px;color:#333;">0.85</div><div class="t cj" style="left:485px;top:725px;width:59px;height:27px;line-height:27px;color:#222;">半/一</div><div class="t" style="left:545px;top:725px;width:44px;height:27px;line-height:27px;color:#333;">1.04</div><div class="t" style="left:590px;top:725px;width:59px;height:27px;line-height:27px;color:#333;">1.68</div><div class="t" style="left:650px;top:725px;width:61px;height:27px;line-height:27px;color:#333;">4.05</div><div class="t" style="left:712px;top:725px;width:61px;height:27px;line-height:27px;color:#333;">4.42</div><div class="t cj" style="left:774px;top:725px;width:37px;height:27px;line-height:27px;color:#f50000;">胜</div><div class="t cj" style="left:812px;top:725px;width:37px;height:27px;line-height:27px;color:#f50000;">赢</div><div class="t cj" style="left:850px;top:725px;width:56px;height:27px;line-height:27px;color:#0000e8;">走</div><div class="sel" style="left:472px;top:57px;width:59px;height:20px;"><span class="sl">Crow*</span><svg class="arr" width="7" height="6" viewBox="0 0 7 6"><path d="M0.5 0H6.5L3.5 6Z" fill="#111"/></svg></div><div class="sel" style="left:539px;top:57px;width:36px;height:20px;"><span class="sl" style="font-size:12px;left:4px">终</span><svg class="arr" width="7" height="6" viewBox="0 0 7 6"><path d="M0.5 0H6.5L3.5 6Z" fill="#111"/></svg></div><div class="sel" style="left:623px;top:57px;width:84px;height:20px;"><span class="sl" style="font-size:12px;left:4px">胜平负均值</span><svg class="arr" width="7" height="6" viewBox="0 0 7 6"><path d="M0.5 0H6.5L3.5 6Z" fill="#111"/></svg></div><div class="sel" style="left:715px;top:57px;width:36px;height:20px;"><span class="sl" style="font-size:12px;left:4px">终</span><svg class="arr" width="7" height="6" viewBox="0 0 7 6"><path d="M0.5 0H6.5L3.5 6Z" fill="#111"/></svg></div><div class="sel" style="left:819px;top:57px;width:47px;height:20px;"><span class="sl" style="font-size:12px;left:4px">全场</span><svg class="arr" width="7" height="6" viewBox="0 0 7 6"><path d="M0.5 0H6.5L3.5 6Z" fill="#111"/></svg></div><div class="sel" style="left:464px;top:432px;width:59px;height:20px;"><span class="sl">Crow*</span><svg class="arr" width="7" height="6" viewBox="0 0 7 6"><path d="M0.5 0H6.5L3.5 6Z" fill="#111"/></svg></div><div class="sel" style="left:531px;top:432px;width:36px;height:20px;"><span class="sl" style="font-size:12px;left:4px">终</span><svg class="arr" width="7" height="6" viewBox="0 0 7 6"><path d="M0.5 0H6.5L3.5 6Z" fill="#111"/></svg></div><div class="sel" style="left:617px;top:432px;width:84px;height:20px;"><span class="sl" style="font-size:12px;left:4px">胜平负均值</span><svg class="arr" width="7" height="6" viewBox="0 0 7 6"><path d="M0.5 0H6.5L3.5 6Z" fill="#111"/></svg></div><div class="sel" style="left:709px;top:432px;width:36px;height:20px;"><span class="sl" style="font-size:12px;left:4px">终</span><svg class="arr" width="7" height="6" viewBox="0 0 7 6"><path d="M0.5 0H6.5L3.5 6Z" fill="#111"/></svg></div><div class="sel" style="left:816px;top:432px;width:47px;height:20px;"><span class="sl" style="font-size:12px;left:4px">全场</span><svg class="arr" width="7" height="6" viewBox="0 0 7 6"><path d="M0.5 0H6.5L3.5 6Z" fill="#111"/></svg></div><div class="a" style="left:0px;top:377px;width:907px;height:27px;background:#fff;"></div><div class="a" style="left:0px;top:404px;width:907px;height:1px;background:#bdbdbd;"></div><div class="lbl sum" style="left:268px;top:384px;letter-spacing:0.22px">近<span style="color:#f00">10</span>场,胜3平4负3, 胜率:</div><div class="gbox" style="left:404px;top:381px;width:36px">30%</div><div class="lbl sum" style="left:443px;top:384px;letter-spacing:0.4px">赢率:<span style="color:#33f">44.4%</span> 大:</div><div class="gbox" style="left:529px;top:381px;width:47px">22.2%</div><div class="lbl sum" style="left:580px;top:384px;letter-spacing:0.27px">单率:<span style="color:#33f">50%</span></div></body></html>
